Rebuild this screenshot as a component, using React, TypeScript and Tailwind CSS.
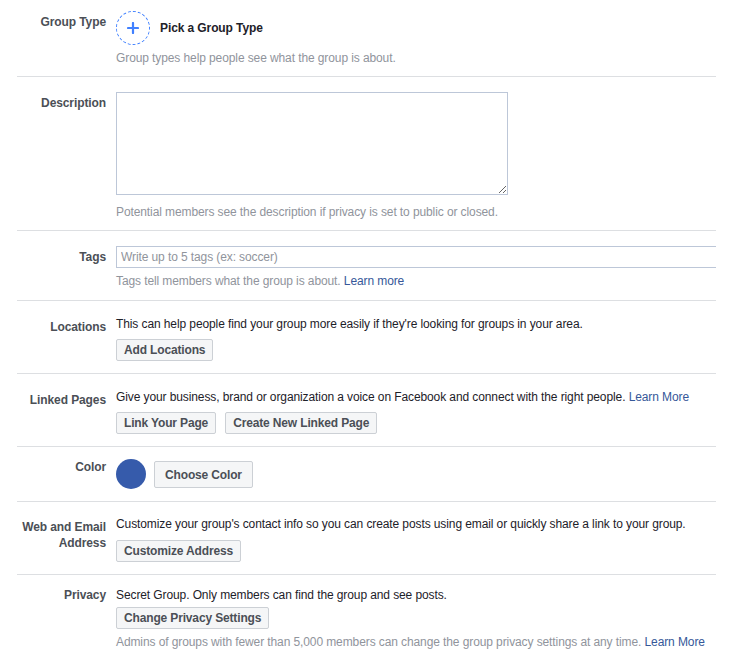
import React from "react";

const Btn = ({ children, tall }: { children: React.ReactNode; tall?: boolean }) => (
  <button
    className={
      "px-[7px] border border-[#ccd0d5] bg-[#f5f6f7] rounded-[2px] text-[12px] font-bold text-[#4b4f56] leading-none tracking-[-0.15px] " +
      (tall ? "h-[27px]" : "h-[22px]")
    }
  >
    {children}
  </button>
);

const Label = ({ children, mt = "mt-0" }: { children: React.ReactNode; mt?: string }) => (
  <div className={"w-[89px] shrink-0 text-right font-bold text-[#4b4f56] text-[12px] leading-[16px] " + mt}>{children}</div>
);

const Divider = () => <div className="h-px bg-[#dddfe2]" />;

export default function App() {
  return (
    <div className="w-[736px] h-[660px] bg-white overflow-hidden" style={{ fontFamily: '"Liberation Sans", Arial, sans-serif' }}>
      <div className="ml-[17px] w-[699px] overflow-hidden text-[12px] leading-[16px] text-[#1d2129] tracking-[-0.1px]">
        {/* Group Type */}
        <div className="flex pt-[11px] pb-[10px]">
          <Label mt="mt-[3px]">Group Type</Label>
          <div className="ml-[10px] flex flex-col">
            <div className="flex items-center h-[34px]">
              <div className="w-[34px] h-[34px] rounded-full border border-dashed border-[#4080ff] flex items-center justify-center">
                <svg width="12" height="12" viewBox="0 0 12 12">
                  <path d="M6 1v10M1 6h10" stroke="#4080ff" strokeWidth="2.2" strokeLinecap="round" />
                </svg>
              </div>
              <span className="ml-[10px] font-bold text-[#1d2129]">Pick a Group Type</span>
            </div>
            <div className="mt-[5px] text-[#90949c]">Group types help people see what the group is about.</div>
          </div>
        </div>
        <Divider />
        {/* Description */}
        <div className="flex pt-[15px] pb-[10px]">
          <Label mt="mt-[3px]">Description</Label>
          <div className="ml-[10px] flex flex-col">
            <textarea className="block w-[392px] h-[103px] border border-[#bdc7d8] outline-none" />
            <div className="mt-[9px] text-[#90949c]">Potential members see the description if privacy is set to public or closed.</div>
          </div>
        </div>
        <Divider />
        {/* Tags */}
        <div className="flex pt-[15px] pb-[11px]">
          <Label mt="mt-[3px]">Tags</Label>
          <div className="ml-[10px] flex flex-col flex-1 min-w-0">
            <input
              className="block w-[640px] shrink-0 h-[22px] border border-[#bdc7d8] px-[4px] text-[12px] outline-none placeholder:text-[#90949c]"
              placeholder="Write up to 5 tags (ex: soccer)"
            />
            <div className="mt-[5px] text-[#90949c]">
              Tags tell members what the group is about. <span className="text-[#365899]">Learn more</span>
            </div>
          </div>
        </div>
        <Divider />
        {/* Locations */}
        <div className="flex pt-[15px] pb-[12px]">
          <Label mt="mt-[3px]">Locations</Label>
          <div className="ml-[10px] flex flex-col items-start">
            <div>This can help people find your group more easily if they're looking for groups in your area.</div>
            <div className="mt-[7px]">
              <Btn>Add Locations</Btn>
            </div>
          </div>
        </div>
        <Divider />
        {/* Linked Pages */}
        <div className="flex pt-[15px] pb-[12px]">
          <Label mt="mt-[3px]">Linked Pages</Label>
          <div className="ml-[10px] flex flex-col items-start">
            <div>
              Give your business, brand or organization a voice on Facebook and connect with the right people.{" "}
              <span className="text-[#365899]">Learn More</span>
            </div>
            <div className="mt-[7px] flex gap-[9px]">
              <Btn>Link Your Page</Btn>
              <Btn>Create New Linked Page</Btn>
            </div>
          </div>
        </div>
        <Divider />
        {/* Color */}
        <div className="flex pt-[12px] pb-[12px]">
          <Label>Color</Label>
          <div className="ml-[10px] flex items-start">
            <div className="w-[30px] h-[30px] rounded-full bg-[#365bab]" />
            <div className="ml-[8px] mt-[2px]">
              <Btn tall>
                <span className="px-[3px]">Choose Color</span>
              </Btn>
            </div>
          </div>
        </div>
        <Divider />
        {/* Web and Email */}
        <div className="flex pt-[14px] pb-[12px]">
          <Label mt="mt-[3px]">
            Web and Email
            <br />
            Address
          </Label>
          <div className="ml-[10px] flex flex-col items-start">
            <div>Customize your group's contact info so you can create posts using email or quickly share a link to your group.</div>
            <div className="mt-[8px]">
              <Btn>Customize Address</Btn>
            </div>
          </div>
        </div>
        <Divider />
        {/* Privacy */}
        <div className="flex pt-[12px]">
          <Label>Privacy</Label>
          <div className="ml-[10px] flex flex-col items-start">
            <div>Secret Group. Only members can find the group and see posts.</div>
            <div className="mt-[4px]">
              <Btn>Change Privacy Settings</Btn>
            </div>
            <div className="mt-[5px] text-[#90949c]">
              Admins of groups with fewer than 5,000 members can change the group privacy settings at any time.{" "}
              <span className="text-[#365899]">Learn More</span>
            </div>
          </div>
        </div>
      </div>
    </div>
  );
}
